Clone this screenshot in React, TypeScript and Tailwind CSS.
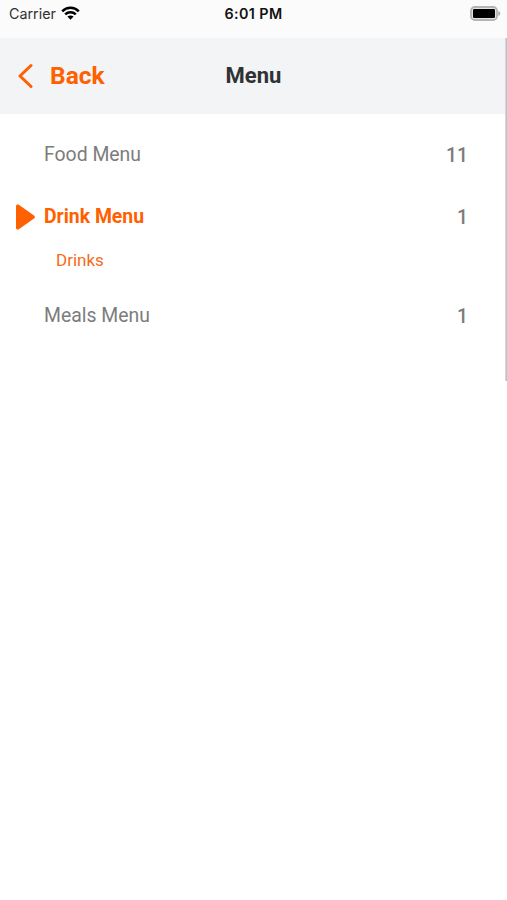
import type { ReactNode } from 'react'

interface MenuEntry {
  name: string
  count: number
  active?: boolean
  items?: string[]
}

const menus: MenuEntry[] = [
  { name: 'Food Menu', count: 11 },
  { name: 'Drink Menu', count: 1, active: true, items: ['Drinks'] },
  { name: 'Meals Menu', count: 1 },
]

function WifiIcon(): ReactNode {
  return (
    <svg className="-mt-[2px] ml-[5px] h-[14px] w-[19px]" viewBox="0 0 19 14" fill="none" stroke="#000" strokeWidth="2.5">
      <path d="M1.2 5.3C5.8 0.7 13.2 0.7 17.8 5.3" />
      <path d="M4.2 8.4C7.1 5.6 11.9 5.6 14.8 8.4" />
      <path d="M9.5 13.7L6.4 10.6C8.1 9 10.9 9 12.6 10.6Z" fill="#000" stroke="none" />
    </svg>
  )
}

function BatteryIcon(): ReactNode {
  return (
    <svg className="h-[15px] w-[31px]" viewBox="0 0 31 15">
      <rect x="1" y="1" width="26" height="13" rx="3.8" fill="#e4e4e4" stroke="#b4b4b4" strokeWidth="1.8" />
      <rect x="3" y="3" width="22" height="9" rx="1.2" fill="#000" />
      <path d="M28.3 5v5c1.2-.5 2-1.4 2-2.5s-.8-2-2-2.5Z" fill="#a8a8a8" />
    </svg>
  )
}

function StatusBar(): ReactNode {
  return (
    <div className="grid h-[38px] grid-cols-3 items-start bg-[#fbfbfb] px-[6px] pt-[4px]">
      <div className="flex h-[19px] items-center pl-[3px]">
        <span className="font-['Inter',sans-serif] text-[14.3px] leading-[19px] text-[#303030]">Carrier</span>
        <WifiIcon />
      </div>
      <div className="text-center font-['Inter',sans-serif] text-[14.3px] leading-[19px] font-semibold tracking-[0.4px] text-[#111]">
        6:01 PM
      </div>
      <div className="flex h-[18px] items-center justify-end">
        <BatteryIcon />
      </div>
    </div>
  )
}

function Header(): ReactNode {
  return (
    <header className="grid h-[76px] grid-cols-3 items-center bg-[#f2f4f5] px-[18px]">
      <button className="flex items-center gap-[17px] text-left text-[#ff6000]">
        <svg className="h-[26px] w-[15px]" viewBox="0 0 15 26" fill="none" stroke="currentColor" strokeWidth="3">
          <path d="M13 2.5L2 13L13 23.5" strokeLinecap="round" strokeLinejoin="round" />
        </svg>
        <span className="text-[24.5px] leading-[30px] font-bold">Back</span>
      </button>
      <h1 className="text-center text-[22px] leading-[26px] font-bold text-[#303234]">Menu</h1>
    </header>
  )
}

function MenuRow({ name, count, active, items }: MenuEntry): ReactNode {
  return (
    <li>
      <div className="flex h-[62px] items-center pr-[39px] pl-[16px]">
        <div className="w-[28px] pt-[2px]">
          {active && (
            <svg className="h-[26px] w-[20px]" viewBox="0 0 20 26" fill="#ff6000">
              <path d="M0 2.2C0 .6 1.4 0 2.8 .8L18 11.4C19.2 12.3 19.2 13.7 18 14.6L2.8 25.2C1.4 26 0 25.4 0 23.8Z" />
            </svg>
          )}
        </div>
        <span
          className={
            active
              ? 'flex-1 pt-[2px] text-[19.4px] leading-6 font-bold text-[#ff6000]'
              : 'flex-1 pt-[2px] text-[19.4px] leading-6 text-[#7c7c7c]'
          }
        >
          {name}
        </span>
        <span className="pt-[4px] text-[19.4px] leading-6 font-medium text-[#7c7c7c]">{count}</span>
      </div>
      {items && (
        <ul className="pb-[11px] pl-[56px]">
          {items.map((item) => (
            <li key={item} className="text-[17px] leading-[26px] text-[#f66a18]">
              {item}
            </li>
          ))}
        </ul>
      )}
    </li>
  )
}

export default function App(): ReactNode {
  return (
    <div className="relative min-h-screen bg-white font-['Roboto',sans-serif]">
      <StatusBar />
      <Header />
      <ul className="pt-[9px]">
        {menus.map((menu) => (
          <MenuRow key={menu.name} {...menu} />
        ))}
      </ul>
      {/* scroll indicator */}
      <div className="absolute top-[38px] right-0 h-[343px] w-[2px] bg-linear-to-r from-[#dde2ea] to-[#acb9ca]" />
    </div>
  )
}
